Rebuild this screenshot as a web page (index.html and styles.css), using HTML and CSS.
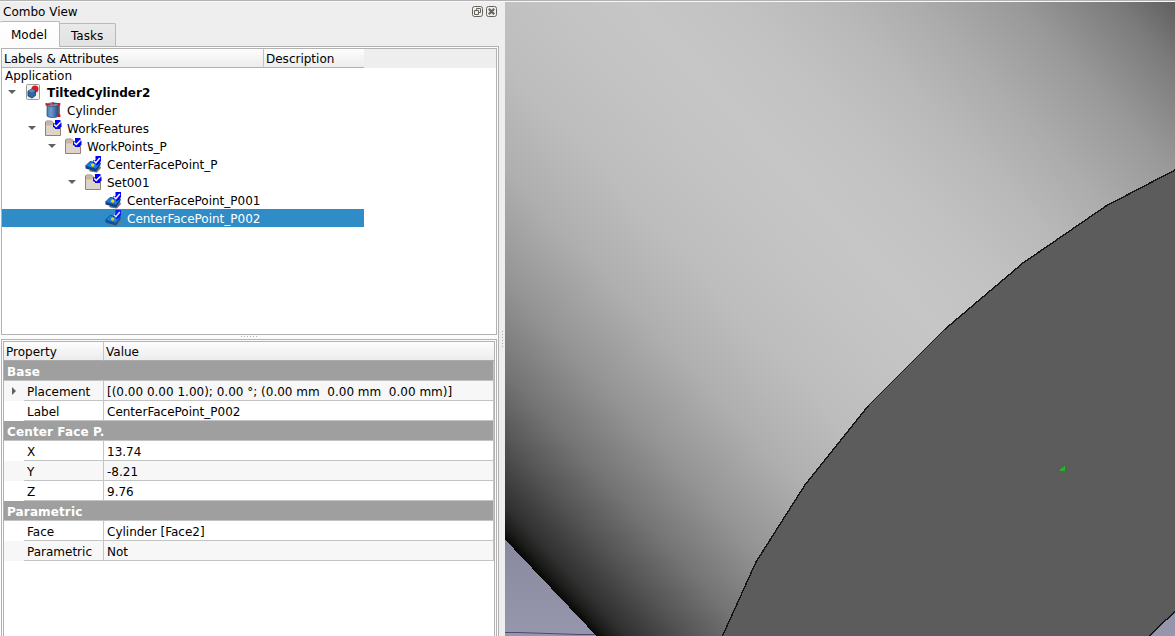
FILE: index.html
```html
<!DOCTYPE html>
<html lang="en">
<head>
<meta charset="utf-8">
<title>Combo View</title>
<link rel="stylesheet" href="styles.css">
</head>
<body>
<svg class="defs" width="0" height="0" aria-hidden="true">
  <defs>
    <linearGradient id="blue" x1="0" y1="0" x2="1" y2="0"><stop offset="0" stop-color="#4c7cb5"/><stop offset=".35" stop-color="#6e9bcf"/><stop offset="1" stop-color="#214a80"/></linearGradient>
    <symbol id="doc" viewBox="0 0 16 16">
      <rect x="1.500" y=".5" width="13" height="15" rx="1" fill="#f3f3f3" stroke="#999"/>
      <circle cx="10" cy="5" r="3.500" fill="#d91c24"/>
      <path d="M3 7l4-2 3.500 1.500v5L7 14l-4-2z" fill="#3465a4" stroke="#16355f" stroke-width=".8"/>
      <path d="M3 7l4-2 3.500 1.500L7 8.500z" fill="#5988c0"/>
    </symbol>
    <symbol id="cyl" viewBox="0 0 16 16">
      <path d="M2 3v11c2 2 9.500 2 11.500 0V3z" fill="url(#blue)" stroke="#24466f" stroke-width=".7"/>
      <ellipse cx="7.700" cy="2.700" rx="5.700" ry="1.900" fill="#6a8db8" stroke="#41505f" stroke-width=".7"/>
      <path d="M1.500 2.500h4M8 1.500h6" stroke="#c32028" stroke-width="1"/>
      <path d="M14.300 3v11" stroke="#c51d25" stroke-width="1"/>
      <path d="M.5 1h2v2.500h-2zM7 .5h2v2H7zM13 1h2.300v2.500H13zM13 12.500h2.400V15H13z" fill="#c91820"/>
    </symbol>
    <symbol id="check" viewBox="0 0 10 10">
      <path d="M3 0h5.500v2L9.500 3v4L8 7.500V9H3V8L1 7V3.500h2z" fill="#00f"/>
      <path d="M2.200 4.500l2.100 2L8.500 2.300" fill="none" stroke="#fff" stroke-width="1.500"/>
    </symbol>
    <symbol id="folder" viewBox="0 0 17 17">
      <path d="M.5 15.500V2L1.500 1h5L8 2.500V4h7.500v11.500z" fill="#dfd4ca" stroke="#96806f"/>
      <path d="M1 2.500l1-1h4.500l1 1v2L6.500 5.500H1z" fill="#c8b5a5"/>
      <use href="#check" x="7" y="0" width="10" height="10"/>
    </symbol>
    <symbol id="point" viewBox="0 0 17 17">
      <path d="M4 14l1 1.500 7 1 4-4.500-1-2z" fill="#77766c"/>
      <path d="M.5 10L5 5.500l10.500 1.500-4.500 6.500z" fill="#1280dc" stroke="#082f70" stroke-width=".8"/>
      <path d="M.5 10v2.500l10.500 3L15.500 9V7L11 13z" fill="#0a3f91"/>
      <circle cx="7.700" cy="9" r="1.700" fill="#ffd900"/>
      <path d="M10.500 0H16v5l-1.500 2.500-3 2-1-2L8 7V4h2.500z" fill="#00f"/>
      <path d="M8.600 4.500l2.300 2.200L14.800 2" fill="none" stroke="#fff" stroke-width="1.500"/>
    </symbol>
  </defs>
</svg>
<div class="window">
  <aside class="panel">
    <header class="titlebar"><span>Combo View</span>
      <svg class="buttons" width="25" height="11" viewBox="0 0 25 11" fill="none" stroke="#66635d">
        <rect x=".5" y=".5" width="10" height="10" rx="2"/><path d="M4.500 4V2.500h4v4H7M2.500 4.500h4v4h-4z"/>
        <rect x="14.500" y=".5" width="10" height="10" rx="2"/><path d="M16.800 2.800l5.400 5.400M22.200 2.800l-5.400 5.400" stroke-width="2.200"/>
      </svg>
    </header>
    <nav class="tabs"><div class="tab active">Model</div><div class="tab">Tasks</div></nav>
    <main class="page">
      <section class="tree">
        <div class="tree-head"><div class="h-label">Labels &amp; Attributes</div><div class="h-desc">Description</div></div>
        <div class="root">Application</div>
        <div class="row l1"><i class="down"></i><svg class="ico"><use href="#doc" width="16" height="16"/></svg><b>TiltedCylinder2</b></div>
        <div class="row l2"><i class="none"></i><svg class="ico"><use href="#cyl" width="16" height="16"/></svg><span>Cylinder</span></div>
        <div class="row l2"><i class="down"></i><svg class="ico"><use href="#folder" width="17" height="17"/></svg><span>WorkFeatures</span></div>
        <div class="row l3"><i class="down"></i><svg class="ico"><use href="#folder" width="17" height="17"/></svg><span>WorkPoints_P</span></div>
        <div class="row l4"><i class="none"></i><svg class="ico"><use href="#point" width="17" height="17"/></svg><span>CenterFacePoint_P</span></div>
        <div class="row l4"><i class="down"></i><svg class="ico"><use href="#folder" width="17" height="17"/></svg><span>Set001</span></div>
        <div class="row l5"><i class="none"></i><svg class="ico"><use href="#point" width="17" height="17"/></svg><span>CenterFacePoint_P001</span></div>
        <div class="row l5 selected"><i class="none"></i><svg class="ico"><use href="#point" width="17" height="17"/></svg><span>CenterFacePoint_P002</span></div>
      </section>
      <div class="grip"></div>
      <section class="props"><div class="props-in">
        <div class="prop head"><span class="name">Property</span><span class="value">Value</span></div>
        <div class="group">Base</div>
        <div class="prop alt"><i><u class="right"></u></i><span class="name">Placement</span><span class="value">[(0.00 0.00 1.00); 0.00 °; (0.00 mm&nbsp; 0.00 mm&nbsp; 0.00 mm)]</span></div>
        <div class="prop"><i></i><span class="name">Label</span><span class="value">CenterFacePoint_P002</span></div>
        <div class="group">Center Face P.</div>
        <div class="prop"><i></i><span class="name">X</span><span class="value">13.74</span></div>
        <div class="prop alt"><i></i><span class="name">Y</span><span class="value">-8.21</span></div>
        <div class="prop"><i></i><span class="name">Z</span><span class="value">9.76</span></div>
        <div class="group">Parametric</div>
        <div class="prop"><i></i><span class="name">Face</span><span class="value">Cylinder [Face2]</span></div>
        <div class="prop alt"><i></i><span class="name">Parametric</span><span class="value">Not</span></div>
      </div></section>
    </main>
  </aside>
  <div class="splitter"><div class="vgrip"></div></div>
  <svg class="view" width="670" height="634" viewBox="505 2 670 634">
    <defs>
      <linearGradient id="body" gradientUnits="userSpaceOnUse" x1="505" y1="538" x2="1165" y2="-75">
        <stop offset="0" stop-color="#080806"/><stop offset=".01" stop-color="#1c1c1b"/><stop offset=".025" stop-color="#303030"/><stop offset=".075" stop-color="#555"/><stop offset=".125" stop-color="#747474"/><stop offset=".195" stop-color="#949494"/><stop offset=".28" stop-color="#afafaf"/><stop offset=".36" stop-color="#bdbdbd"/><stop offset=".44" stop-color="#c3c3c3"/><stop offset=".51" stop-color="#c6c6c6"/><stop offset=".59" stop-color="#c2c2c2"/><stop offset=".67" stop-color="#b9b9b9"/><stop offset=".74" stop-color="#acacac"/><stop offset=".82" stop-color="#999"/><stop offset=".9" stop-color="#7b7b7b"/><stop offset=".95" stop-color="#606060"/><stop offset="1" stop-color="#404040"/>
      </linearGradient>
      <linearGradient id="sky" x1="0" y1="0" x2="0" y2="1"><stop offset=".84" stop-color="#8888a0"/><stop offset="1" stop-color="#9696ac"/></linearGradient>
    </defs>
    <rect x="505" y="2" width="670" height="634" fill="url(#sky)"/>
    <path d="M505 632.500h13l30 1 30 1h18" fill="none" stroke="#4b4b70"/>
    <path d="M505 2h670v400L724 636H596.500L505 539.500z" fill="url(#body)" shape-rendering="crispEdges"/>
    <path d="M1175 170L1106 206 1023 263 944 330 869 405 805 485 756 562 722.500 636H1149L1175 611.500z" fill="#5c5c5c"/>
    <path d="M1175 170L1106 206 1023 263 944 330 869 405 805 485 756 562 722.500 636M1149 636L1175 611.500" fill="none" stroke="#151515" stroke-width="1.400" shape-rendering="crispEdges"/>
    <path d="M1060 471v-2h1v-1h2v-1h1v-1h1v5z" fill="#24b524" shape-rendering="crispEdges"/>
  </svg>
</div>
</body>
</html>
```
FILE: styles.css
```css
* { box-sizing: border-box; }
body { margin: 0; overflow: hidden; background: #eee; color: #000; font: 12px/18px "DejaVu Sans", sans-serif; }
.defs { display: block; }
.window { display: flex; height: 636px; border-top: 1px solid #b2b2b2; box-shadow: inset 0 1px #f8f8f8; }
.panel { width: 499px; display: flex; flex-direction: column; }
.titlebar { height: 21px; padding: 1px 2px 0 3px; display: flex; justify-content: space-between; line-height: 20px; }
.buttons { margin: 4px 0 0; }
.tabs { height: 24px; display: flex; align-items: flex-end; }
.tab { height: 23px; width: 56px; border: 1px solid #b9b9b9; border-bottom: 0; border-left: 0; background: linear-gradient(#e9e9e9, #e2e2e2); line-height: 24px; padding-left: 11px; border-radius: 0 2px 0 0; }
.tab.active { width: 60px; height: 26px; background: linear-gradient(#fff, #fcfcfc); border-radius: 2px 2px 0 0; z-index: 1; margin-bottom: -1px; line-height: 26px; }
.page { flex: 1; min-height: 0; border: 1px solid #b0b0b0; border-left: 0; border-bottom: 0; background: #fcfcfc; padding: 1px 1px 0 1px; display: flex; flex-direction: column; }
.tree { height: 287px; border: 1px solid #b2b2b2; background: #fff; flex: none; }
.tree-head { height: 19px; display: flex; background: #eee; line-height: 21px; }
.tree-head div { background: linear-gradient(#fdfdfd, #ececec); border-bottom: 1px solid #b0b0b0; padding-left: 2px; }
.h-label { width: 262px; border-right: 1px solid #c2c2c2; }
.h-desc { width: 100px; }
.root { height: 15px; padding-left: 3px; line-height: 16px; }
.row { height: 18px; width: 362px; display: flex; align-items: center; line-height: 20px; }
.row i { width: 20px; flex: none; }
.row i.down::before { content: ""; display: block; width: 8px; height: 4px; margin-left: 6px; background: #606060; clip-path: polygon(0 0, 100% 0, 50% 100%); }
.ico { width: 17px; height: 17px; margin: 0 2px 0 3px; flex: none; }
.l1 .ico { height: 16px; }
.row b, .row span { margin: 0 0 -1px 3px; height: 19px; }
.l1 { padding-left: 0; }
.l2 { padding-left: 20px; }
.l3 { padding-left: 40px; }
.l4 { padding-left: 60px; }
.l5 { padding-left: 80px; }
.selected { background: #308cc6; color: #fff; }
.selected .ico { opacity: .8; }
.grip { height: 4px; flex: none; margin: 0 auto; width: 17px; background: repeating-linear-gradient(90deg, #b4b4b4 0 1px, transparent 1px 3px) 0 1px / 100% 1px no-repeat; }
.props { flex: 1; min-height: 0; border: 1px solid #b2b2b2; border-bottom: 0; padding: 1px 1px 0; }
.props-in { height: 100%; border: 1px solid #b2b2b2; border-bottom: 0; background: #fff; }
.prop { height: 20px; display: flex; line-height: 22px; border-right: 1px solid #c4c4c4; }
.prop.head { height: 19px; line-height: 21px; background: linear-gradient(#fdfdfd, #ebebeb); border-right: 0; }
.prop i { width: 20px; flex: none; padding: 6px 0 0 8px; }
.right { display: block; width: 4px; height: 8px; background: #606060; clip-path: polygon(0 0, 100% 50%, 0 100%); }
.name { width: 80px; flex: none; padding-left: 3px; border-right: 1px solid #c4c4c4; border-bottom: 1px solid #c4c4c4; }
.value { flex: 1; padding-left: 3px; border-bottom: 1px solid #c4c4c4; }
.head .name { width: 100px; padding-left: 2px; border-bottom-color: #aaa; }
.head .value { padding-left: 2px; border-bottom-color: #aaa; }
.alt { background: #f7f7f7; }
.group { height: 20px; background: #9f9f9f; color: #fff; font-weight: bold; letter-spacing: .13px; padding-left: 3px; line-height: 22px; border-bottom: 1px solid #c4c4c4; border-right: 1px solid #c4c4c4; }
.splitter { width: 6px; display: flex; align-items: flex-start; padding: 330px 0 0 3px; }
.vgrip { width: 1px; height: 17px; background: repeating-linear-gradient(#aaa 0 1px, transparent 1px 3px); }
.view { display: block; margin-top: 1px; flex: none; }
```
